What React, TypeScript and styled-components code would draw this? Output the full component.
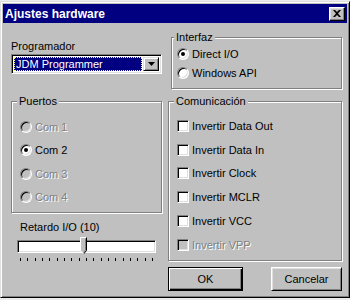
import React from 'react';
import styled, {createGlobalStyle} from 'styled-components';

//region Styled
const GlobalStyle = createGlobalStyle`
  html, body {
    margin: 0;
    padding: 0;
  }
  body {
    width: 350px;
    height: 300px;
    overflow: hidden;
    background: #ececec;
    font-family: "Liberation Sans", Arial, sans-serif;
    font-size: 11px;
    color: #000;
  }
`;

const Desktop = styled.div`
  width: 350px;
  height: 300px;
  padding-top: 1px;
  box-sizing: border-box;
`;

const Window = styled.div`
  width: 350px;
  height: 297px;
  box-sizing: border-box;
  background: #c0c0c0;
  border: 1px solid;
  border-color: #dfdfdf #000 #000 #dfdfdf;
  box-shadow: inset 1px 1px #fff, inset -1px -1px #808080;
  padding: 2px;
  display: flex;
  flex-direction: column;
`;

const TitleBar = styled.div`
  height: 19px;
  flex: none;
  background: #000080;
  display: flex;
  align-items: center;
  justify-content: space-between;
  padding: 0 2px 0 2px;
`;

const Title = styled.span`
  color: #fff;
  font-weight: bold;
  font-size: 12px;
`;

const CloseButton = styled.div`
  width: 16px;
  height: 14px;
  box-sizing: border-box;
  background: #c0c0c0;
  border: 1px solid;
  border-color: #fff #000 #000 #fff;
  box-shadow: inset -1px -1px #808080, inset 1px 1px #dfdfdf;
  display: flex;
  align-items: center;
  justify-content: center;
`;

const Body = styled.div`
  display: flex;
  gap: 6px;
  padding-left: 8px;
`;

const Column = styled.div<{$width: number; $top: number}>`
  width: ${p => p.$width}px;
  padding-top: ${p => p.$top}px;
  display: flex;
  flex-direction: column;
`;

const Label = styled.div<{$indent?: number; $gap?: number}>`
  line-height: 13px;
  margin-top: ${p => p.$gap || 0}px;
  padding-left: ${p => p.$indent || 0}px;
  white-space: nowrap;
`;

const Combo = styled.div`
  margin-top: 1px;
  height: 20px;
  box-sizing: border-box;
  background: #fff;
  border: 1px solid;
  border-color: #808080 #fff #fff #808080;
  box-shadow: inset 1px 1px #000, inset -1px -1px #dfdfdf;
  padding: 2px;
  display: flex;
  gap: 1px;
`;

const ComboValue = styled.div`
  flex: 1;
  background: #000080;
  color: #fff;
  line-height: 14px;
  padding-left: 2px;
  outline: 1px dotted #ffff80;
  outline-offset: -1px;
`;

const ComboArrow = styled.div`
  width: 16px;
  box-sizing: border-box;
  background: #c0c0c0;
  border: 1px solid;
  border-color: #dfdfdf #000 #000 #dfdfdf;
  box-shadow: inset 1px 1px #fff, inset -1px -1px #808080;
  display: flex;
  align-items: center;
  justify-content: center;
`;

const Group = styled.fieldset<{$height: number; $top: number; $gap?: number; $pad?: number; $shift?: number}>`
  margin: ${p => p.$gap || 0}px 0 0 ${p => p.$shift || 0}px;
  height: ${p => p.$height}px;
  box-sizing: border-box;
  min-inline-size: 0;
  padding: ${p => p.$top}px 0 0 ${p => p.$pad ?? 8}px;
  border: 1px solid #808080;
  box-shadow: 1px 1px 0 #fff, inset 1px 1px 0 #fff;
`;

const Legend = styled.legend`
  padding: 0 2px;
  margin-left: -3px;
  line-height: 13px;
  background: #c0c0c0;
`;

const OptionRow = styled.div<{$height: number; $disabled?: boolean}>`
  height: ${p => p.$height}px;
  display: flex;
  align-items: center;
  gap: 3px;
  white-space: nowrap;
  color: ${p => p.$disabled ? '#808080' : '#000'};
  text-shadow: ${p => p.$disabled ? '1px 1px 0 #fff' : 'none'};
`;

const RadioCircle = styled.span<{$checked?: boolean; $disabled?: boolean}>`
  position: relative;
  flex: none;
  width: 12px;
  height: 12px;
  box-sizing: border-box;
  border-radius: 50%;
  border: 1px solid;
  border-color: #808080 #fff #fff #808080;
  background: ${p => p.$disabled ? '#c0c0c0' : '#fff'};
  box-shadow: inset 1px 1px 0 #000, inset -1px -1px 0 #dfdfdf;

  &::after {
    content: '';
    display: ${p => p.$checked ? 'block' : 'none'};
    position: absolute;
    left: 3px;
    top: 3px;
    width: 4px;
    height: 4px;
    border-radius: 50%;
    background: #000;
  }
`;

const CheckBox = styled.span<{$disabled?: boolean}>`
  flex: none;
  width: 12px;
  height: 12px;
  box-sizing: border-box;
  border: 1px solid;
  border-color: #808080 #fff #fff #808080;
  background: ${p => p.$disabled ? '#c0c0c0' : '#fff'};
  box-shadow: inset 1px 1px 0 #000, inset -1px -1px 0 #dfdfdf;
`;

const SliderBox = styled.div`
  position: relative;
  margin: 3px 0 0 6px;
  width: 139px;
  height: 25px;
`;

const Track = styled.div`
  margin-top: 3px;
  height: 13px;
  box-sizing: border-box;
  background: #fff;
  border: 1px solid;
  border-color: #808080 #fff #fff #808080;
  box-shadow: inset 1px 1px 0 #000, inset -1px -1px 0 #dfdfdf;
`;

const Thumb = styled.svg`
  position: absolute;
  top: 0;
`;

const Ticks = styled.div`
  margin: 5px 3px 0 3px;
  display: flex;
  justify-content: space-between;
`;

const Tick = styled.span`
  width: 1px;
  height: 3px;
  background: #000;
`;

const Buttons = styled.div`
  margin-top: 6px;
  display: flex;
  justify-content: space-between;
`;

const Button = styled.div<{$width: number; $default?: boolean}>`
  width: ${p => p.$width}px;
  height: 24px;
  box-sizing: border-box;
  display: flex;
  align-items: center;
  justify-content: center;
  background: #c0c0c0;
  border: 1px solid;
  border-color: ${p => p.$default ? '#000' : '#fff #000 #000 #fff'};
  box-shadow: ${p => p.$default
    ? 'inset 1px 1px 0 #fff, inset -1px -1px 0 #000, inset -2px -2px 0 #808080'
    : 'inset 1px 1px 0 #dfdfdf, inset -1px -1px 0 #808080'};
`;
//endregion

const ports = [
    {name: 'Com 1', disabled: true},
    {name: 'Com 2', checked: true},
    {name: 'Com 3', disabled: true},
    {name: 'Com 4', disabled: true},
];

const options = [
    {name: 'Invertir Data Out'},
    {name: 'Invertir Data In'},
    {name: 'Invertir Clock'},
    {name: 'Invertir MCLR'},
    {name: 'Invertir VCC'},
    {name: 'Invertir VPP', disabled: true},
];

const tickCount = 19;
const sliderValue = 10;
const sliderMax = 20;

const App = () => {
    const thumbLeft = (sliderValue / sliderMax) * 126;

    return (
        <Desktop>
            <GlobalStyle/>
            <Window>
                <TitleBar>
                    <Title>Ajustes hardware</Title>
                    <CloseButton>
                        <svg width="8" height="7" viewBox="0 0 8 7">
                            <path d="M0 0h2l2 2 2-2h2L5 3.5 8 7H6L4 5 2 7H0l3-3.5z" fill="#000"/>
                        </svg>
                    </CloseButton>
                </TitleBar>
                <Body>
                    <Column $width={151} $top={17}>
                        <Label>Programador</Label>
                        <Combo>
                            <ComboValue>JDM Programmer</ComboValue>
                            <ComboArrow>
                                <svg width="7" height="4" viewBox="0 0 7 4">
                                    <path d="M0 0h7L3.5 4z" fill="#000"/>
                                </svg>
                            </ComboArrow>
                        </Combo>
                        <Group $height={118} $top={7} $gap={21}>
                            <Legend>Puertos</Legend>
                            {ports.map(port => (
                                <OptionRow key={port.name} $height={23.5} $disabled={port.disabled}>
                                    <RadioCircle $checked={port.checked} $disabled={port.disabled}/>
                                    {port.name}
                                </OptionRow>
                            ))}
                        </Group>
                        <Label $indent={9} $gap={8}>Retardo I/O ({sliderValue})</Label>
                        <SliderBox>
                            <Track/>
                            <Thumb width="7" height="18" viewBox="0 0 7 18" style={{left: thumbLeft}}>
                                <path d="M0.5 0.5h6v13l-3 3.5-3-3.5z" fill="#c0c0c0"/>
                                <path d="M0.5 13.5V0.5h6" fill="none" stroke="#fff"/>
                                <path d="M6.5 0.5v13l-3 3.5" fill="none" stroke="#000"/>
                                <path d="M5.5 1.5v11.5l-2 2.3" fill="none" stroke="#808080"/>
                                <path d="M0.5 13.5l3 3.5" fill="none" stroke="#fff"/>
                            </Thumb>
                            <Ticks>
                                {Array.from({length: tickCount}, (_, i) => <Tick key={i}/>)}
                            </Ticks>
                        </SliderBox>
                    </Column>
                    <Column $width={174} $top={8}>
                        <Group $height={58} $top={0} $pad={5} $shift={3}>
                            <Legend>Interfaz</Legend>
                            <OptionRow $height={19.5}>
                                <RadioCircle $checked/>
                                Direct I/O
                            </OptionRow>
                            <OptionRow $height={19.5}>
                                <RadioCircle/>
                                Windows API
                            </OptionRow>
                        </Group>
                        <Group $height={166} $top={6} $gap={6}>
                            <Legend>Comunicación</Legend>
                            {options.map(option => (
                                <OptionRow key={option.name} $height={23.8} $disabled={option.disabled}>
                                    <CheckBox $disabled={option.disabled}/>
                                    {option.name}
                                </OptionRow>
                            ))}
                        </Group>
                        <Buttons>
                            <Button $width={75} $default>OK</Button>
                            <Button $width={71}>Cancelar</Button>
                        </Buttons>
                    </Column>
                </Body>
            </Window>
        </Desktop>
    );
};

export default App;
